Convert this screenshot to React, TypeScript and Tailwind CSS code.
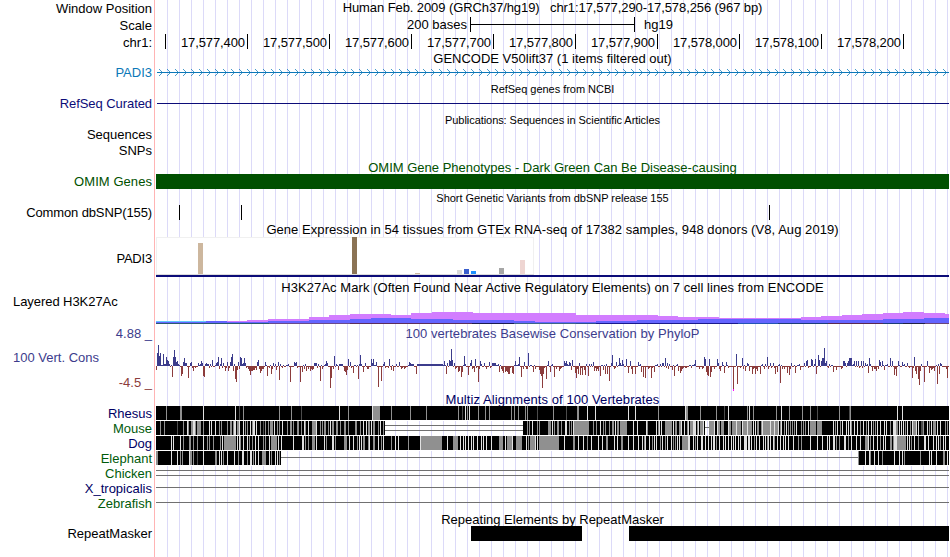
import React from 'react';
import clsx from 'clsx';

// Horizontal extent of the track area, in image pixels
const LEFT = 156;
const WIDTH = 793;

const rulerTicks = [
  '17,577,400', '17,577,500', '17,577,600', '17,577,700', '17,577,800',
  '17,577,900', '17,578,000', '17,578,100', '17,578,200',
];

// x, top, colour
const gtexBars: [number, number, string][] = [
  [198, 6, '#cdb79e'],
  [352, 0, '#8b7355'],
  [415, 36, '#cdb79e'],
  [457, 33, '#d9d9d9'],
  [464, 32, '#3a5fcd'],
  [471, 34, '#1e90ff'],
  [499, 31, '#a6a6a6'],
  [520, 23, '#eed5d2'],
];

// x, top of the layer
const h3kPurple: [number, number][] = [
  [156, 14], [227, 12], [247, 11], [268, 10], [309, 8], [329, 6], [350, 5], [391, 6], [411, 4],
  [432, 3], [473, 4], [576, 6], [658, 7], [678, 8], [719, 9], [801, 8], [821, 7],
  [842, 6], [862, 5], [883, 4], [903, 3], [924, 4], [945, 5],
];
const h3kBlue: [number, number][] = [
  [156, 13], [206, 12], [227, 13], [268, 12], [309, 11], [350, 10], [371, 9], [411, 10],
  [453, 11], [514, 12], [535, 13], [596, 12], [637, 11], [698, 10], [801, 11],
  [883, 10], [924, 9],
];
const h3kBase: [number, number, string][] = [
  [156, 113, '#2b5a70'], [269, 81, '#6a4a8a'], [350, 122, '#5c2e5c'], [472, 42, '#1c1c50'],
  [514, 62, '#3e6486'], [576, 20, '#30508a'], [596, 142, '#1a1a8c'], [738, 40, '#2355b4'],
  [778, 50, '#1c3c78'], [828, 55, '#5a2850'], [883, 20, '#1c3c78'], [903, 22, '#222244'], [925, 24, '#6a4678'],
];

const scores =
  '156:-4 157:13 158:21 159:10 160:13 161:1 163:12 164:2 165:2 166:9 167:6 168:5 169:2 171:1 172:-11 173:9 174:16 175:9 176:4 177:5 178:2 179:1 181:-10 182:-8 183:4 184:8 185:3 186:3 188:-12 190:3 191:4 193:-5 195:-2 198:3 201:5 202:3 203:-10 204:-11 205:2 206:3 207:2 208:2 210:2 212:6 216:3 217:4 218:9 219:-3 220:2 221:8 222:-2 223:3 225:-5 227:4 228:-5 230:4 231:9 232:12 233:-5 235:-13 236:-16 237:-4 238:4 239:-3 240:9 241:8 242:2 243:3 244:8 245:3 248:-3 249:-5 250:-9 251:-5 252:-5 253:-4 254:-4 255:-2 256:-4 257:4 258:6 259:-3 260:-7 261:-5 263:-3 265:4 267:-10 269:-2 271:-8 272:-3 273:3 275:2 276:-4 278:4 279:-14 280:2 282:-2 290:-16 294:4 295:3 296:4 300:-16 302:-6 304:-3 306:-5 308:-3 310:-5 311:-3 312:-4 314:3 315:3 316:3 318:2 320:-15 322:-3 326:5 327:3 330:-22 331:-12 334:10 336:2 338:-4 340:2 341:2 344:-5 345:-6 346:-9 347:-4 348:7 350:4 353:-7 358:-13 360:11 361:2 363:-6 365:3 368:-3 371:7 372:3 373:7 376:4 378:-21 381:-15 383:2 384:4 389:7 391:-4 393:-5 399:4 409:4 410:3 411:2 412:2 416:-8 ' +
  '444:5 446:-8 447:3 449:6 450:5 451:17 452:6 454:3 455:-3 458:-6 459:-5 461:-11 462:-6 464:10 465:2 468:-9 470:3 471:6 472:-3 474:-6 475:7 478:-16 479:-3 480:5 484:3 486:-3 489:4 492:3 493:3 494:3 495:3 499:-6 501:-3 502:-5 503:-7 505:-6 506:-5 507:-6 508:-8 509:-8 510:-2 512:-7 513:-8 515:5 519:9 521:-11 524:4 527:-3 528:13 533:-6 535:-3 539:-4 540:-8 541:-10 542:-22 543:-8 546:-13 548:5 550:-6 554:-11 556:-3 559:-5 564:5 565:3 566:5 567:2 569:4 570:3 571:-4 572:6 575:-7 576:-12 578:-8 579:3 580:-9 582:-9 584:-4 585:-9 588:-10 591:2 593:4 594:-5 596:-5 598:-5 600:-10 603:-4 605:-8 607:-8 609:-15 611:3 612:11 616:4 619:8 620:3 622:6 626:7 628:-7 630:5 632:-8 635:-8 638:4 ' +
  '641:-6 643:-11 645:-12 651:-12 654:-6 662:3 663:3 665:8 667:3 669:2 672:-4 674:-10 678:-5 680:-7 681:-5 685:-2 691:-2 695:6 704:9 705:7 706:-6 707:-9 708:-10 709:7 710:-11 711:-6 714:-3 717:7 718:3 720:-5 722:4 724:-7 726:4 728:-2 733:-25 736:12 737:-18 742:8 743:-3 745:-5 747:3 749:-5 752:-8 755:-8 757:-5 760:-8 764:-3 767:9 768:-3 770:3 773:3 775:-8 777:-6 780:-17 782:-3 784:-3 787:-7 789:-9 791:3 795:-7 800:-4 804:3 806:5 807:6 811:7 812:6 814:2 815:7 816:-8 818:11 819:6 821:5 822:8 823:8 824:18 825:3 826:5 829:2 833:-6 836:-4 843:5 844:5 845:3 847:3 848:5 849:8 850:8 851:8 854:5 856:5 858:5 861:5 863:5 865:3 868:-7 869:8 872:-5 874:-3 876:-5 879:6 880:4 882:5 884:-4 890:8 892:5 894:-9 896:-10 898:5 902:4 907:3 909:-2 912:-12 914:9 915:-5 916:-8 918:-13 919:-19 920:-5 924:-16 927:5 929:-7 931:-4 934:-5 937:-18 939:-8 940:3 947:-12';

const peaks = new Map(scores.split(' ').map((s) => s.split(':').map(Number) as [number, number]));
const quiet = [-1, -1, 1, -2, -1, 2, -1, -3, -1, 1, -1];

const phyloP = Array.from({ length: WIDTH }, (_, i) => {
  const x = LEFT + i;
  const flat = x > 416 && x < 443 ? 2 : quiet[(i * 7 + (i >> 3)) % quiet.length];
  return { x, v: peaks.get(x) ?? flat };
});

// Mismatched bases: x, shade (w, g or d) and an optional width
const rhesus =
  '166g 180g2 203w 235w 239d 243g 279g 291g 301d 339w 348g 372w 373g7 391g 410g 426g 458g 462d 465w 467g 469w 478g 485g 489g 511g 514g 518g 525g 527g 537d 553g 566d 577g2 587w 595w 628w 635w 658g 685w 686g2 700g 716g 724d 728w 747g 749w 753g 776g 781w 789g 802g 810g 817d 839g 849d 850g 897w 902w';
const mouse =
  '160g 164g 177d 183g 187w 188g 191g2 193w2 195g 197g2 199g2 203g 209w 211w 215w 219g 221g 227g 230g2 233g 234w2 237g2 239w 243w 245g 247g 250w 252g 253w2 256w 260g 263d 265g 268g 270g3 274w 277g 279g 282w 287g 290g2 293g 297g 298g 301g 304w 305g 308w 312g4 316w 320g 322g 324g2 328g 330w 332g2 336g2 340g 344g2 348g 355g2 360g 363w 366w 368g2 371w 373g2 378g 380w 383g ' +
  '527g 529g 532w 537g 539g 548g3 552w 554g 557g2 561g 565w2 569g 571g 573w 574g15 593g 596g 600w 603g 605g 609g 612g2 615w 617g2 620g7 633w 637w ' +
  '646w 647g 656w 658g 659w 661w 665g3 668g 669g3 673w 675g 676g 679g2 681w 684w 687g 688w 690g 691g2 693w3 697g 698w 700g3 703w 709g4 713g 714w 717w 718g 719g 721g2 723g 728w 729g2 732g 733g3 736w 737g 738g3 742w 743g 744g3 747w 748g 749g2 751g 753w 755w 757g2 761g9 762w 770w 771g3 774w 775g3 778w 780g 781w 784g 786w 788g 790g 792g 794g 796w 801g 803g 805g 808w 810g2 812g4 817g5 833w 835g 837w 840g 842w 846w 848w 850w 851g 854w 857w 860g 863w 866g 868w 871w 873g 875g 877w 880w 884w 886w 890g 893w3 896g 897g 899w 901w 903w 905g 907w 910g 912w 913g3 916w 918w 921d2 923g 927w 929g 931w 933g3 937w 940w 945g 947g';
const dog =
  '171w 173w 180w 183g 189g2 193g 197g 203w 207g 209g 213g 220g 222w 224g12 237w 239w 240g 243w 247w 249g 252g 255w 258w 263g 265g 269w 271g6 278w 281w 293w 302w2 305g 308g 312g3 316w 324w 326g 332w2 335g 344g3 349w 353w 357g 359w 361w 363g2 368g 369w 373g2 378w 381g 383w 391g 395w 398w 408g 420w 421g 422g20 447w 453g5 460w 463w 465w 468w 471w 473w 477w 481w 483w 486w 491w 499g4 505w 507g5 512w 516g 517g5 526w 528g 530g5 535w 537w 539g20 564w 573g2 578w 583w 587g 591w 598w 602w 606g2 614w 617w 621g2 628w 633w 638w ' +
  '642w 644g 645w 649w 652g 654w 656w 660g 662w 665g 667w 671w 673g 675g 677w 679w 682g6 688w 689w 693w 695g 697w 701w 702w 705w 708w 711w 713w2 716g 719w 723w 725w 728w 731w 733w 735w 738w 740w 744w3 748w2 751w 754g 756w 759w 763w 765w 767g 768w 770w 773w 774g 777w 780w 783w 785w 788w 793w 798g 801g 810w 817w 822w 827w 829w 833w2 836g 839g 844w2 848g 851w 856w 860w 865g3 868w 870g 873w 877w 880g 883w 885w 890g2 893g 894w3 897g9 907w 909w 911g 914w 918g 924w2 928w 933w 936w 938w 940g 943w 945w';
const elephant =
  '156g2 171w 177w 180g 182g 189w 190g2 193g 197d 203w 215g2 219w 221w 223g 227w 234w 238g 242w2 247g 250w2 253g 255w 258w 262g4 269w 271g 275w 277w 279g 858g 865w 869w 870g 874w 878w 882g 894w 899w 902w 904g 920g 929w 931w 936w 943g2 947w';

const shades: Record<string, string> = { w: '#e1e1e1', g: '#909090', d: '#4c4c4c' };

type Span = [number, number];

const Lane: React.FC<{ blocks: Span[]; marks?: string; lines?: [number, number, number][] }> = ({ blocks, marks, lines = [] }) => (
  <svg width={WIDTH} height={15} viewBox={`${LEFT} 0 ${WIDTH} 15`} shapeRendering="crispEdges">
    {lines.map(([x1, x2, y]) => (
      <rect key={`${x1}-${y}`} x={x1} y={y} width={x2 - x1} height={1} fill="#707070" />
    ))}
    {blocks.map(([x1, x2]) => (
      <React.Fragment key={x1}>
        <rect x={x1} y={0} width={x2 - x1} height={14} fill="#000" />
        <rect x={x1} y={14} width={x2 - x1} height={1} fill="#fff" />
      </React.Fragment>
    ))}
    {marks?.split(' ').map((m, i) => {
      const [, x, shade, w] = m.match(/^(\d+)([wgd])(\d*)$/)!;
      return <rect key={i} x={x} y={0} width={w || 1} height={14} fill={shades[shade]} />;
    })}
  </svg>
);

// One horizontal strip of the image: label on the left, drawing or title on the right
const Row: React.FC<{ h: string; label?: React.ReactNode; labelClass?: string; className?: string; children?: React.ReactNode }> = ({
  h, label, labelClass, className, children,
}) => (
  <div className={clsx('flex shrink-0', h)}>
    <div className={clsx('flex w-[154px] shrink-0 items-center justify-end whitespace-pre pr-0.5', labelClass)}>{label}</div>
    <div className="border-l border-[#ffb4b4] pl-px">
      <div
        className={clsx(
          'flex h-full w-[793px] whitespace-pre bg-[repeating-linear-gradient(90deg,transparent_0_11px,#dcdaf8_11px_12px)]',
          className,
        )}
      >
        {children}
      </div>
    </div>
  </div>
);

const Title: React.FC<{ h: string; className?: string; children: React.ReactNode }> = ({ h, className, children }) => (
  <Row h={h} className={clsx('items-center justify-center', className)}>
    {children}
  </Row>
);

const NAVY = 'text-[#000064]';
const GREEN = 'text-[#005a0a]';

const steps = (data: [number, number][]) =>
  data.map(([x, y], i) => ({ x, y, w: (data[i + 1]?.[0] ?? LEFT + WIDTH) - x }));

const App: React.FC = () => (
  <div className="flex h-[557px] w-[950px] flex-col overflow-hidden bg-white font-['Liberation_Sans',Arial,sans-serif] text-[13px] leading-[15px] text-black">
    <Row h="h-[17px]" label="Window Position" className="items-center justify-center pb-0.5 tracking-[-0.09px]">
      {'Human Feb. 2009 (GRCh37/hg19)   chr1:17,577,290-17,578,256 (967 bp)'}
    </Row>
    <Row h="h-[17px]" label="Scale" className="items-start">
      <span className="w-[311px] text-right">200 bases</span>
      <svg className="ml-[3px]" width={165} height={15} shapeRendering="crispEdges">
        <path d="M0 0h1v15h-1zM0 7h165v1H0zM164 0h1v15h-1z" />
      </svg>
      <span className="ml-[9px]">hg19</span>
    </Row>
    <Row h="h-[17px]" label="chr1:">
      <div className="flex h-[15px]">
        <div className="w-2.5 border-r border-black" />
        {rulerTicks.map((t) => (
          <div key={t} className="w-[82px] border-r border-black pr-0.5 pt-px text-right tracking-[-0.1px]">{t}</div>
        ))}
      </div>
    </Row>

    <Title h="h-[14px]">GENCODE V50lift37 (1 items filtered out)</Title>
    <Row h="h-[15px]" label="PADI3" labelClass="text-[#0c78b8]">
      <svg width={WIDTH} height={15} viewBox={`${LEFT} 0 ${WIDTH} 15`} shapeRendering="crispEdges" fill="#0c78b8">
        <rect x={157} y={7} width={792} height={1} />
        {Array.from({ length: 99 }, (_, i) => 159 + i * 8).map((x) => (
          <path key={x} d={`M${x} 4h1v1h1v1h1v1h1v1h-1v1h-1v1h-1v1h-1v-1h1v-1h1v-1h1v-1h-1v-1h-1v-1h-1z`} opacity={0.75} />
        ))}
      </svg>
    </Row>

    <Title h="h-4" className="pt-0.5 text-[11px] tracking-[-0.03px]">RefSeq genes from NCBI</Title>
    <Row h="h-[15px]" label="RefSeq Curated" labelClass="text-[#0c0c78] tracking-[-0.07px]" className="items-center">
      <div className="ml-px h-px w-full bg-[#0c0c78]" />
    </Row>

    <Title h="h-4" className="pt-0.5 text-[11px] tracking-[-0.06px]">Publications: Sequences in Scientific Articles</Title>
    <Row h="h-4" label="Sequences" labelClass="pb-0.5" />
    <Row h="h-4" label="SNPs" labelClass="pb-0.5" />

    <Title h="h-[15px]" className="pt-px text-[#005000]">OMIM Gene Phenotypes - Dark Green Can Be Disease-causing</Title>
    <Row h="h-[15px]" label="OMIM Genes" labelClass="text-[#005000] tracking-[0.06px]">
      <div className="w-full bg-[#005000]" />
    </Row>

    <Title h="h-4" className="pt-0.5 text-[11px] tracking-[-0.02px]">Short Genetic Variants from dbSNP release 155</Title>
    <Row h="h-[15px]" label="Common dbSNP(155)" labelClass="tracking-[-0.12px]">
      <svg width={WIDTH} height={15} viewBox={`${LEFT} 0 ${WIDTH} 15`} shapeRendering="crispEdges">
        {[179, 241, 769].map((x) => <rect key={x} x={x} y={0} width={1} height={15} />)}
      </svg>
    </Row>

    <Title h="h-[17px]" className="pt-0.5 tracking-[0.055px]">
      Gene Expression in 54 tissues from GTEx RNA-seq of 17382 samples, 948 donors (V8, Aug 2019)
    </Title>
    <Row h="h-10" label="PADI3" labelClass="pt-0.5 tracking-[-0.2px]">
      <svg width={WIDTH} height={40} viewBox={`${LEFT} 0 ${WIDTH} 40`} shapeRendering="crispEdges">
        <rect x={156} y={0} width={378} height={38} fill="#f0f0f0" />
        <rect x={157} y={1} width={376} height={36} fill="#fff" />
        <rect x={156} y={37} width={378} height={1} fill="#ddd" />
        {gtexBars.map(([x, y, fill]) => <rect key={x} x={x} y={y} width={5} height={37 - y} fill={fill} />)}
        <rect x={156} y={38} width={793} height={2} fill="#0c0c78" />
      </svg>
    </Row>

    <Title h="h-[17px]" className="pt-1 tracking-[0.055px]">
      H3K27Ac Mark (Often Found Near Active Regulatory Elements) on 7 cell lines from ENCODE
    </Title>
    <Row h="h-[15px]" label="Layered H3K27Ac" labelClass="!justify-start pl-[13px] tracking-[-0.06px]" />
    <Row h="h-[15px]">
      <svg width={WIDTH} height={15} viewBox={`${LEFT} 0 ${WIDTH} 15`} shapeRendering="crispEdges">
        {steps(h3kPurple).map((s) => <rect key={s.x} x={s.x} y={s.y} width={s.w} height={15 - s.y} fill="#d27dff" />)}
        {steps(h3kBlue).map((s) => <rect key={s.x} x={s.x} y={s.y} width={s.w} height={15 - s.y} fill="#6464ff" />)}
        <rect x={156} y={12} width={50} height={1} fill="#64c8ff" />
        {h3kBase.map(([x, w, fill]) => <rect key={x} x={x} y={14} width={w} height={1} fill={fill} />)}
      </svg>
    </Row>

    <Row
      h="h-[17px]"
      label="4.88 _"
      labelClass="pt-0.5 text-[#3c3c8c]"
      className="items-center justify-center pt-0.5 tracking-[0.04px] text-[#3c3c8c]"
    >
      100 vertebrates Basewise Conservation by PhyloP
    </Row>
    <Row
      h="h-[50px]"
      labelClass="text-[#3c3c8c]"
      label={
        <div className="flex h-full w-full flex-col justify-between pb-px pl-[13px] pt-[9px]">
          <span>100 Vert. Cons</span>
          <span className="text-right text-[#8c3c3c]">-4.5 _</span>
        </div>
      }
    >
      <svg width={WIDTH} height={50} viewBox={`${LEFT} 0 ${WIDTH} 50`} shapeRendering="crispEdges">
        {phyloP.map(({ x, v }) => (
          <rect key={x} x={x} y={v > 0 ? 25 - v : 25} width={1} height={Math.abs(v)} fill={v > 0 ? '#3c3c8c' : '#8c3c3c'} />
        ))}
        <rect x={733} y={48} width={1} height={2} fill="#ff00ff" />
      </svg>
    </Row>

    <Title h="h-[15px]" className={clsx('pt-0.5 tracking-[0.08px]', NAVY)}>Multiz Alignments of 100 Vertebrates</Title>
    <Row h="h-[15px]" label="Rhesus" labelClass={NAVY}><Lane blocks={[[156, 949]]} marks={rhesus} /></Row>
    <Row h="h-[15px]" label="Mouse" labelClass={GREEN}>
      <Lane
        blocks={[[156, 385], [523, 705], [709, 949]]}
        marks={mouse}
        lines={[[385, 523, 4], [385, 523, 9], [705, 709, 6]]}
      />
    </Row>
    <Row h="h-[15px]" label="Dog" labelClass={NAVY}><Lane blocks={[[156, 949]]} marks={dog} /></Row>
    <Row h="h-[15px]" label="Elephant" labelClass={GREEN}>
      <Lane blocks={[[156, 281], [858, 949]]} marks={elephant} lines={[[281, 858, 6]]} />
    </Row>
    <Row h="h-[15px]" label="Chicken" labelClass={GREEN}><Lane blocks={[]} lines={[[156, 949, 4], [156, 949, 9]]} /></Row>
    <Row h="h-[15px]" label="X_tropicalis" labelClass={NAVY}><Lane blocks={[]} lines={[[156, 949, 6]]} /></Row>
    <Row h="h-[15px]" label="Zebrafish" labelClass={GREEN}><Lane blocks={[]} lines={[[156, 949, 6]]} /></Row>

    <Title h="h-[15px]" className="pt-0.5">Repeating Elements by RepeatMasker</Title>
    <Row h="h-[15px]" label="RepeatMasker">
      <div className="ml-[315px] w-[111px] bg-black" />
      <div className="ml-[47px] w-[320px] bg-black" />
    </Row>
    <Row h="h-4" />
  </div>
);

export default App;
